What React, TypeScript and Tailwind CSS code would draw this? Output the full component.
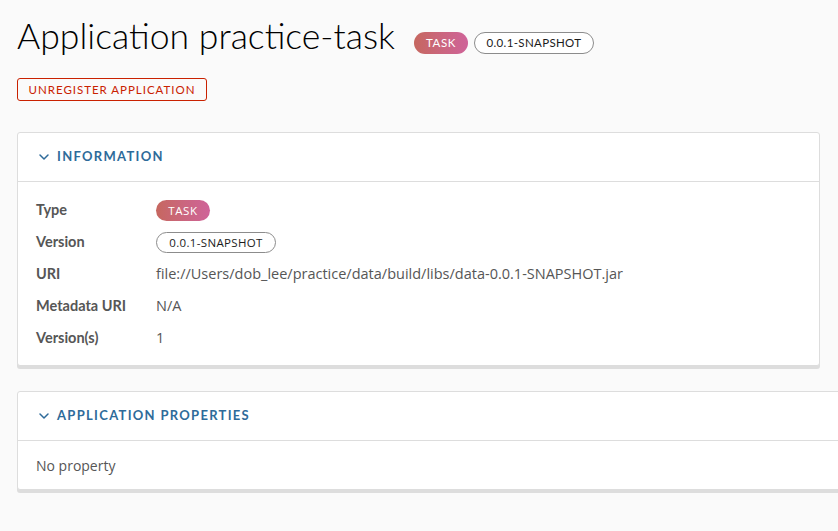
import React from "react";

const font = { fontFamily: "Lato, 'Open Sans', sans-serif" };
const valueFont = { fontFamily: "'Open Sans', Lato, sans-serif" };

function Chevron() {
  return (
    <svg width="12" height="12" viewBox="0 0 12 12" className="shrink-0">
      <path d="M2 4 L6 8 L10 4" fill="none" stroke="#2e6b9a" strokeWidth="1.5" strokeLinecap="round" strokeLinejoin="round" />
    </svg>
  );
}

function TaskBadge({ tall }: { tall?: boolean }) {
  return (
    <span
      className={
        (tall ? "h-[22px] " : "h-[21px] ") +
        "inline-flex w-[54px] items-center justify-center rounded-full bg-gradient-to-r from-[#c6675f] to-[#cf6399] text-[11.5px] tracking-[0.05em] text-white"
      }
    >
      TASK
    </span>
  );
}

function VersionBadge({ tall }: { tall?: boolean }) {
  return (
    <span
      className={
        (tall ? "h-[22px] " : "h-[21px] ") +
        "inline-flex w-[120px] items-center justify-center rounded-full border border-[#8c8c8c] bg-white text-[11.5px] tracking-[0.03em] text-[#1b1b1b]"
      }
    >
      0.0.1-SNAPSHOT
    </span>
  );
}

function Row({ label, children }: { label: string; children: React.ReactNode }) {
  return (
    <div className="flex h-[32px] items-center">
      <div className="w-[120px] text-[14.5px] font-bold text-[#565656]">{label}</div>
      <div className="text-[14.5px] text-[#565656]" style={valueFont}>{children}</div>
    </div>
  );
}

export default function App() {
  return (
    <div className="h-[531px] w-[838px] overflow-hidden bg-[#fafafa]" style={font}>
      <div className="pl-[17px] pt-[14px]">
        <div className="flex items-start">
          <h1 className="text-[35.6px] font-light leading-[44px] text-[#000]">Application practice-task</h1>
          <div className="ml-[19px] mt-[18px] flex gap-[6px]">
            <TaskBadge tall />
            <VersionBadge tall />
          </div>
        </div>
        <button className="mt-[20px] flex h-[23px] w-[190px] items-center justify-center rounded-[3px] border border-[#c92100] text-[11.5px] tracking-[0.085em] text-[#c92100]">
          UNREGISTER APPLICATION
        </button>

        <div className="mt-[31px] w-[803px] rounded-[3px] border border-[#dddddd] bg-white shadow-[0_3px_0_#dddddd]">
          <div className="flex h-[49px] items-center gap-[7px] border-b border-[#dddddd] pl-[20px]">
            <Chevron />
            <span className="text-[13px] font-bold tracking-[0.1em] text-[#2e6b9a]">INFORMATION</span>
          </div>
          <div className="px-[18px] pb-[11px] pt-[12px]">
            <Row label="Type"><TaskBadge /></Row>
            <Row label="Version"><VersionBadge /></Row>
            <Row label="URI">file://Users/dob_lee/practice/data/build/libs/data-0.0.1-SNAPSHOT.jar</Row>
            <Row label="Metadata URI">N/A</Row>
            <Row label="Version(s)">1</Row>
          </div>
        </div>

        <div className="mt-[25px] w-[840px] rounded-[3px] border border-[#dddddd] bg-white shadow-[0_3px_0_#dddddd]">
          <div className="flex h-[49px] items-center gap-[7px] border-b border-[#dddddd] pl-[20px]">
            <Chevron />
            <span className="text-[13px] font-bold tracking-[0.1em] text-[#2e6b9a]">APPLICATION PROPERTIES</span>
          </div>
          <div className="flex h-[48px] items-center pl-[18px] text-[14px] text-[#565656]" style={valueFont}>No property</div>
        </div>
      </div>
    </div>
  );
}
